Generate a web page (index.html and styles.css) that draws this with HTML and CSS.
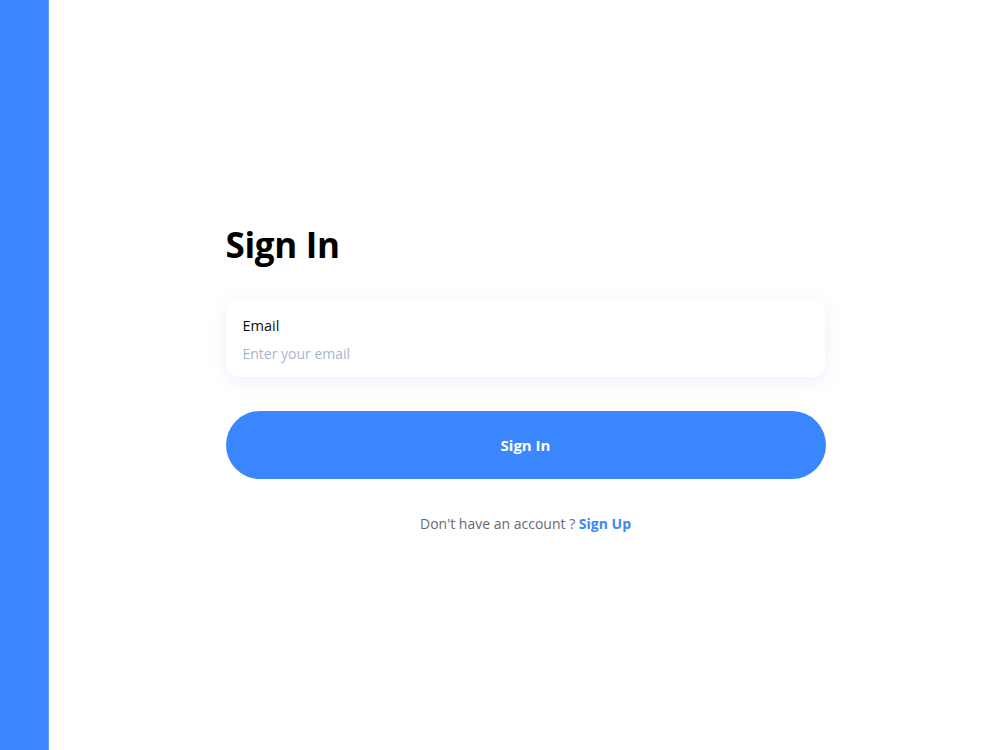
FILE: index.html
```html
<!DOCTYPE html>
<html lang="en">
<head>
    <meta charset="UTF-8">
    <meta name="viewport" content="width=device-width, initial-scale=1.0">
    <title>Sign In</title>
    <link rel="stylesheet" href="styles.css">
</head>
<body>

<div class="page">
    <aside class="side-bar"></aside>

    <main class="main">
        <form class="signin" onsubmit="return false;">
            <h1 class="signin-title">Sign In</h1>

            <label class="field">
                <span class="field-label">Email</span>
                <input class="field-input" type="email" placeholder="Enter your email">
            </label>

            <button class="signin-button" type="submit">Sign In</button>

            <p class="signup-text">Don't have an account ? <a href="#" class="signup-link">Sign Up</a></p>
        </form>
    </main>
</div>

</body>
</html>
```

FILE: styles.css
```css
body {
    margin: 0;
    font-family: "Open Sans", "Noto Sans", sans-serif;
    background-color: #ffffff;
}
.page {
    display: flex;
    height: 100vh;
}
.side-bar {
    width: 48px;
    flex-shrink: 0;
    background-color: #3a86ff;
    border-right: 1px solid #5a9bff;
}
.main {
    flex: 1;
    display: flex;
    justify-content: center;
    align-items: center;
    padding-left: 2px;
}
.signin {
    width: 600px;
    margin-top: 6px;
}
.signin-title {
    margin: 0 0 33px;
    font-size: 35px;
    font-weight: 700;
    line-height: 1.2;
    color: #000;
    letter-spacing: -0.3px;
}
.field {
    display: flex;
    flex-direction: column;
    margin: 0 1px;
    padding: 17px 16px 12px;
    border-radius: 12px;
    background-color: #fff;
    box-shadow: 0 4px 18px rgba(58, 110, 220, 0.10);
}
.field-label {
    font-size: 14.5px;
    color: #111;
    margin-bottom: 8px;
}
.field-input {
    border: none;
    outline: none;
    padding: 0;
    font-family: inherit;
    font-size: 14px;
    color: #222;
    background: transparent;
    height: 22px;
}
.field-input::placeholder {
    color: #a9b6c9;
}
.signin-button {
    display: block;
    width: 100%;
    height: 68px;
    margin-top: 34px;
    border: none;
    border-radius: 34px;
    background-color: #3a86ff;
    color: #fff;
    font-family: inherit;
    font-size: 15px;
    font-weight: 700;
    cursor: pointer;
}
.signup-text {
    margin: 35px 0 0;
    text-align: center;
    font-size: 14px;
    color: #6b6b6b;
}
.signup-link {
    color: #3a86ff;
    font-weight: 700;
    text-decoration: none;
}
```
